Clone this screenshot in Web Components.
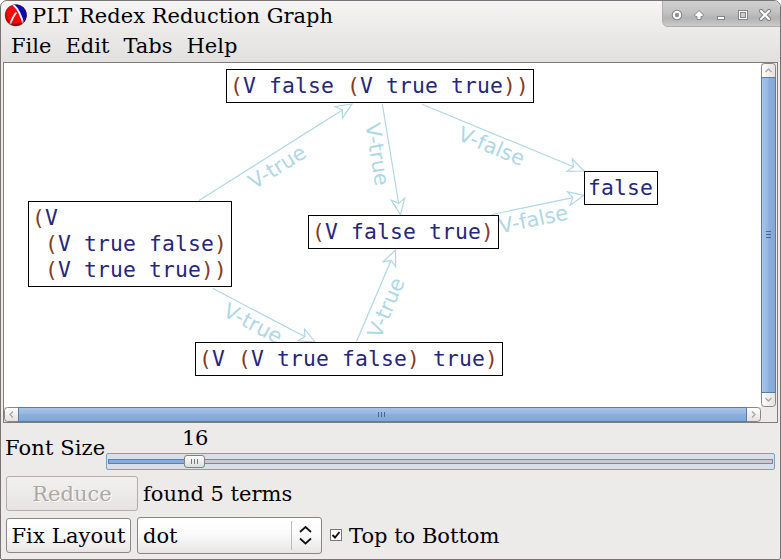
<!DOCTYPE html>
<html lang="en">
<head>
<meta charset="utf-8">
<title>PLT Redex Reduction Graph</title>
<style>
html,body{margin:0;width:781px;height:560px;overflow:hidden;background:#fff}
body{font:21px/24px "DejaVu Serif",serif;color:#000}
</style>
</head>
<body>
<redex-window>
  <title-bar slot="title">PLT Redex Reduction Graph</title-bar>
  <menu-bar slot="menu"><menu-item>File</menu-item><menu-item>Edit</menu-item><menu-item>Tabs</menu-item><menu-item>Help</menu-item></menu-bar>
  <scroll-frame slot="canvas"><reduction-graph></reduction-graph></scroll-frame>
  <size-slider slot="controls" value="16">Font Size</size-slider>
  <control-row slot="controls" style="margin-top:5px;height:35px;--gap:5px">
    <push-button disabled style="width:132px;height:35px">Reduce</push-button><span>found 5 terms</span>
  </control-row>
  <control-row slot="controls" style="margin-top:6px;height:37px;--gap:6px">
    <push-button style="width:125px;height:35px;letter-spacing:.15px">Fix Layout</push-button>
    <choice-box>dot</choice-box>
    <check-box>Top to Bottom</check-box>
  </control-row>
</redex-window>
<script>
function element(name, html, setup) {
  customElements.define(name, class extends HTMLElement {
    constructor() {
      super();
      this.attachShadow({mode: 'open'}).innerHTML = html;
    }
    connectedCallback() { if (setup) setup(this, this.shadowRoot); }
  });
}

element('redex-window', `<style>
:host{display:flex;flex-direction:column;box-sizing:border-box;width:781px;height:560px;border:1px solid #777472;border-radius:7px 7px 2px 2px;background:linear-gradient(#f6f5f5,#edebea 26px,#e3e1e0 61px,#edebea 61px);overflow:hidden}
.controls{padding:0 5px}
</style><slot name="title"></slot><slot name="menu"></slot><slot name="canvas"></slot><div class="controls"><slot name="controls"></slot></div>`);

element('title-bar', `<style>
:host{display:flex;height:30px;align-items:flex-start}
.logo{margin:3px 0 0 3px;flex:none}
.t{margin:3px 0 0 5px;white-space:nowrap;flex:1}
.b{flex:none}
</style>
<svg class="logo" width="23" height="23" viewBox="0 0 23 23">
<defs><radialGradient id="sh" cx=".5" cy=".45" r=".55"><stop offset=".7" stop-color="#300" stop-opacity="0"/><stop offset="1" stop-color="#200" stop-opacity=".6"/></radialGradient><clipPath id="c"><circle cx="11.8" cy="11.2" r="10.8"/></clipPath></defs>
<g clip-path="url(#c)"><rect width="23" height="23" fill="#f50808"/><path d="M9 0H23V23H20.500C18 15 15 7 9 2Z" fill="#0a0ab4"/><path d="M9 .5C14 4.500 17.500 12 20 22M12.300 8.500C9.500 12 7.500 16 5.500 22" fill="none" stroke="#f4eef0" stroke-width="2"/></g><circle cx="11.8" cy="11.2" r="11" fill="url(#sh)"/></svg>
<span class="t"><slot></slot></span>
<svg class="b" width="118" height="26" viewBox="662 1 118 26">
<defs><linearGradient id="g" x2="0" y2="1"><stop stop-color="#d1d0d0"/><stop offset=".45" stop-color="#c3c3c3"/><stop offset=".68" stop-color="#b3b3b3"/><stop offset="1" stop-color="#cbcbcb"/></linearGradient></defs>
<path d="M662.500 0V21Q663 26.500 668 26.500H782V0Z" fill="url(#g)" stroke="#b0afaf"/>
<circle cx="677" cy="15" r="3.300" fill="none" stroke="#858585" stroke-width="4"/><circle cx="677" cy="15" r="3.200" fill="#929292" stroke="#fff" stroke-width="2"/>
<path d="M699 10.500L703.500 15L702.500 16.500H701V19.500H697V16.500H695.500L694.500 15Z" fill="#fff" stroke="#858585"/>
<rect x="717.5" y="16.500" width="7" height="3" fill="#fff" stroke="#858585"/>
<rect x="738.5" y="10.500" width="9" height="9" fill="#fff" stroke="#858585"/><rect x="740.5" y="12.500" width="5" height="5" fill="#ccc" stroke="#858585"/>
<path d="M761 11L769 19M769 11L761 19" stroke="#858585" stroke-width="4.200" stroke-linecap="round"/><path d="M761 11L769 19M769 11L761 19" stroke="#fff" stroke-width="2.100" stroke-linecap="round"/>
</svg>`);

element('menu-bar', `<style>:host{display:flex;gap:14px;height:31px;padding-left:10px;align-items:flex-start;flex:none}</style><slot></slot>`);
element('menu-item', `<style>:host{display:block;padding-top:3px}</style><slot></slot>`);

element('scroll-bar', `<style>
:host{display:block}svg{display:block}
</style>`, (host, root) => {
  const vertical = host.getAttribute('axis') === 'y';
  const L = +host.getAttribute('length'), H = 15, mid = Math.floor(L / 2);
  const w = vertical ? H : L, h = vertical ? L : H;
  /* The bar is drawn horizontally and transposed for the vertical axis. */
  root.innerHTML += `<svg width="${w}" height="${h}"><defs>
  <linearGradient id="b" x2="0" y2="1"><stop stop-color="#a9c5ea"/><stop offset=".45" stop-color="#96b7e2"/><stop offset=".5" stop-color="#8bafdd"/><stop offset="1" stop-color="#81a7d7"/></linearGradient>
  <linearGradient id="w" x2="0" y2="1"><stop stop-color="#fff"/><stop offset="1" stop-color="#e2e0df"/></linearGradient></defs>
  <g transform="${vertical ? 'matrix(0 1 1 0 0 0)' : ''}">
  <path d="M15 .5H3.500Q.5 .5 .5 3.500V11.500Q.5 14.500 3.500 14.500H15Z" fill="url(#w)" stroke="#888583"/>
  <path d="M${L-15} .5H${L-3.5}Q${L-.5} .5 ${L-.5} 3.500V11.500Q${L-.5} 14.500 ${L-3.5} 14.500H${L-15}Z" fill="url(#w)" stroke="#888583"/>
  <rect x="14.500" y=".5" width="${L-29}" height="14" fill="url(#b)" stroke="#5c7ca8"/>
  <path d="M9 4.500L6 7.500L9 10.500M${L-9} 4.500L${L-6} 7.500L${L-9} 10.500" fill="none" stroke="#aaa8a6" stroke-width="1.400"/>
  <path d="M${mid-3.5} 5V10M${mid-.5} 5V10M${mid+2.5} 5V10" stroke="#47668f"/>
  </g></svg>`;
});

element('scroll-frame', `<style>
:host{display:grid;grid-template-columns:757px 16px;grid-template-rows:344px 15px;box-sizing:border-box;margin:0 2px;width:775px;height:361px;border:1px solid #807d7b;background:#edebea;flex:none}
.view{background:#fff;overflow:hidden}
</style><div class="view"><slot></slot></div><scroll-bar axis="y" length="344"></scroll-bar><scroll-bar axis="x" length="757"></scroll-bar>`);

element('term-node', `<style>
:host{position:absolute;box-sizing:border-box;border:1px solid #000;background:#fff;padding:3px 0 0 3px;font:21.33px/26px "DejaVu Sans Mono",monospace;letter-spacing:.16px;color:#262680;white-space:pre}
div{height:26px}
i{font-style:normal;color:#843c24}
</style>`, (host, root) => {
  root.innerHTML += host.getAttribute('term').split('|')
    .map(line => `<div>${line.replace(/[()]/g, '<i>$&</i>')}</div>`).join('');
});

element('reduction-graph', `<style>
:host{display:block;position:relative;width:757px;height:344px}
svg{position:absolute;left:0;top:0}
path{stroke:#add8e6;fill:#fff;stroke-width:1.200}
text{fill:#add8e6;font:20.8px "DejaVu Sans",sans-serif}
</style><svg width="757" height="344" viewBox="4 63 757 344"></svg>`, (host, root) => {
  const edges = [
    [199, 200.5, 352, 104, 'V-true', 260.3, 186],
    [382.3, 104, 400.5, 214.5, 'V-true', 366.3, 131.3],
    [422, 104.3, 584, 171, 'V-false', 463, 142.3],
    [492, 214.5, 584, 195.3, 'V-false', 507.5, 232],
    [213, 288.5, 315, 342, 'V-true', 228, 318.5],
    [356.5, 341.5, 395.5, 250, 'V-true', 383, 333]
  ];
  root.querySelector('svg').innerHTML = edges.map(([x1, y1, x2, y2, label, vx, vy]) => {
    const a = Math.atan2(y2 - y1, x2 - x1) * 180 / Math.PI, len = Math.hypot(x2 - x1, y2 - y1);
    return `<path transform="translate(${x2} ${y2}) rotate(${a})" d="M${-len} 0H-11.300M0 0L-15.500 -6.800L-11.300 0L-15.500 6.800Z"/>
      <text transform="translate(${vx} ${vy}) rotate(${a})" x="-7.100">${label}</text>`;
  }).join('');
  const nodes = [
    [226, 69, 308, 34, '(V false (V true true))'],
    [584, 171, 74, 34, 'false'],
    [28, 201, 204, 86, '(V| (V true false)| (V true true))'],
    [308, 215, 191, 34, '(V false true)'],
    [195, 342, 308, 34, '(V (V true false) true)']
  ];
  for (const [x, y, w, h, term] of nodes) {
    const n = document.createElement('term-node');
    n.setAttribute('term', term);
    n.style.cssText = `left:${x - 4}px;top:${y - 63}px;width:${w}px;height:${h}px`;
    root.append(n);
  }
});

element('size-slider', `<style>
:host{display:flex;height:48px}
.l{width:101px;margin:13px 0 0 -1px;white-space:nowrap;flex:none;letter-spacing:.1px}
.s{width:669px}
.v{padding:3px 0 0 76px;height:27px;letter-spacing:-.3px}
svg{display:block}
</style><span class="l"><slot></slot></span><div class="s"><div class="v"></div>
<svg width="669" height="17" viewBox="106 453 669 17"><defs><linearGradient id="t" x2="0" y2="1"><stop stop-color="#fff"/><stop offset="1" stop-color="#dddbda"/></linearGradient></defs>
<rect x="106.500" y="453.500" width="668" height="16" rx="1.500" fill="#d9dfe7" stroke="#819dc0"/>
<rect x="108.500" y="459.500" width="664" height="4" fill="#c7c8d0" stroke="#85858b"/>
<rect x="108.500" y="459.500" width="80" height="4" fill="#86abdc" stroke="#5d7fae"/>
<rect x="184.500" y="455.500" width="20" height="12" rx="2.500" fill="url(#t)" stroke="#858280"/>
<path d="M191.500 459V464M194.500 459V464M197.500 459V464" stroke="#777"/></svg></div>`, (host, root) => {
  root.querySelector('.v').textContent = host.getAttribute('value');
});

element('control-row', `<style>:host{display:flex;align-items:center;gap:var(--gap);white-space:nowrap}</style><slot></slot>`);

element('push-button', `<style>
:host{display:flex;box-sizing:border-box;align-items:center;justify-content:center;border:1px solid #8a8785;border-radius:3px;background:linear-gradient(#fff,#fbfbfb 45%,#e8e6e5);flex:none}
:host([disabled]){border-color:#b0adab;background:linear-gradient(#f2f1f0,#e6e4e3);color:#aca8a5;text-shadow:1px 1px #fff}
</style><slot></slot>`);

element('choice-box', `<style>
:host{display:flex;box-sizing:border-box;width:185px;height:37px;align-items:center;justify-content:space-between;padding-left:5px;border:1px solid #8a8785;border-radius:3px;background:linear-gradient(#fff,#fbfbfb 45%,#e8e6e5);flex:none}
svg{display:block}
</style><slot></slot><svg width="30" height="35" viewBox="291 518 30 35"><path d="M291.500 521V550" stroke="#bdbab8"/><path d="M300 532L305.500 527L311 532M300 538.500L305.500 543.500L311 538.500" fill="none" stroke="#111" stroke-width="1.700"/></svg>`);

element('check-box', `<style>
:host{display:flex;align-items:center;gap:7px;margin-left:2px}
svg{display:block}
</style><svg width="12" height="13" viewBox="0 0 12 13"><rect x=".5" y=".5" width="11" height="11" fill="#fff" stroke="#777"/><path d="M2.500 6L5 8.500L9.500 3" fill="none" stroke="#111" stroke-width="1.900"/></svg><span><slot></slot></span>`);
</script>
</body>
</html>
